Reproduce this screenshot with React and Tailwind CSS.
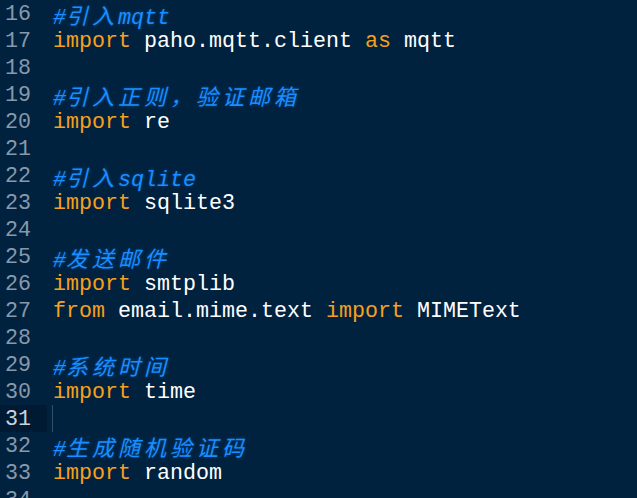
const lines = [
  { n: 16, parts: [['c', '#'], ['cj', '引入'], ['c', 'mqtt']] },
  { n: 17, parts: [['k', 'import'], ['t', ' paho.mqtt.client '], ['k', 'as'], ['t', ' mqtt']] },
  { n: 18, parts: [] },
  { n: 19, parts: [['c', '#'], ['cj', '引入正则，验证邮箱']] },
  { n: 20, parts: [['k', 'import'], ['t', ' re']] },
  { n: 21, parts: [] },
  { n: 22, parts: [['c', '#'], ['cj', '引入'], ['c', 'sqlite']] },
  { n: 23, parts: [['k', 'import'], ['t', ' sqlite3']] },
  { n: 24, parts: [] },
  { n: 25, parts: [['c', '#'], ['cj', '发送邮件']] },
  { n: 26, parts: [['k', 'import'], ['t', ' smtplib']] },
  { n: 27, parts: [['k', 'from'], ['t', ' email.mime.text '], ['k', 'import'], ['t', ' MIMEText']] },
  { n: 28, parts: [] },
  { n: 29, parts: [['c', '#'], ['cj', '系统时间']] },
  { n: 30, parts: [['k', 'import'], ['t', ' time']] },
  { n: 31, parts: [], current: true },
  { n: 32, parts: [['c', '#'], ['cj', '生成随机验证码']] },
  { n: 33, parts: [['k', 'import'], ['t', ' random']] },
  { n: 34, parts: [] },
]

function Token({ kind, text }) {
  if (kind === 'k') return <span className="text-[#f7a01c]">{text}</span>
  if (kind === 't') return <span className="text-white">{text}</span>
  if (kind === 'c')
    return <span className="italic text-[#1c8dff] [text-shadow:0_0_3px_rgba(0,136,255,0.45)]">{text}</span>
  return (
    <span className="italic text-[#1c8dff] text-[22px] tracking-[4px] font-['Noto_Sans_CJK_SC',sans-serif] [text-shadow:0_0_3px_rgba(0,136,255,0.45)]">
      {text}
    </span>
  )
}

export default function App() {
  return (
    <div className="w-[637px] h-[498px] overflow-hidden bg-[#01223f] font-['Liberation_Mono','DejaVu_Sans_Mono',monospace] text-[21.67px] leading-[29px]">
      {lines.map((line) => (
        <div key={line.n} className="flex h-[27px] whitespace-pre">
          <div
            className={`w-[47px] shrink-0 pr-[16px] text-right ${
              line.current ? 'bg-[#001a33] text-[#c9d3de]' : 'text-[#8799ab]'
            }`}
          >
            {line.n}
          </div>
          <div className="relative flex-1 pl-[6px]">
            {line.current && <div className="absolute left-[5px] top-0 h-full w-px bg-white/20" />}
            {line.parts.map(([kind, text], i) => (
              <Token key={i} kind={kind} text={text} />
            ))}
          </div>
        </div>
      ))}
    </div>
  )
}
